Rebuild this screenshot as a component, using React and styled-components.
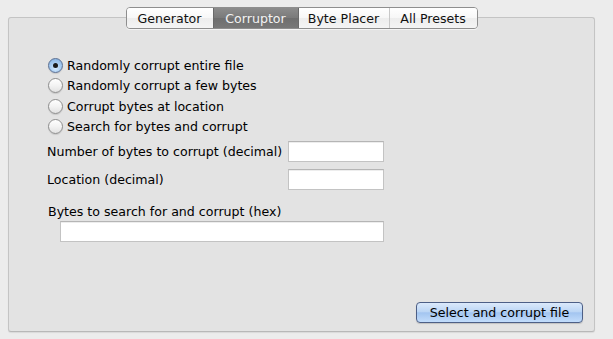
import React, { useState } from "react";
import styled, { createGlobalStyle } from "styled-components";

const Global = createGlobalStyle`
  html, body { margin: 0; padding: 0; background: #ececec; }
  body { font-family: "DejaVu Sans", "Liberation Sans", sans-serif; font-size: 12.6px; color: #000; }
  * { box-sizing: border-box; }
`;

const Window = styled.div`
  width: 613px;
  height: 339px;
  background: #ececec;
  padding: 7px 0 0 8px;
`;

const TabView = styled.div`
  width: 587px;
  display: flex;
  flex-direction: column;
  align-items: center;
`;

const TabBar = styled.div`
  display: flex;
  height: 22px;
  border: 1px solid #8e8e8e;
  border-radius: 4px;
  overflow: hidden;
  position: relative;
  z-index: 1;
  box-shadow: 0 1px 0 rgba(255,255,255,0.6);
`;

const Tab = styled.button`
  font: inherit;
  font-size: 12.6px;
  height: 100%;
  width: ${(p) => p.$w}px;
  padding: 0;
  border: none;
  border-left: ${(p) => (p.$first ? "none" : `1px solid ${p.$sep}`)};
  background: ${(p) =>
    p.$active
      ? "linear-gradient(#8c8c8c, #7a7a7a 50%, #6e6e6e 51%, #787878)"
      : "linear-gradient(#ffffff, #f7f7f7 50%, #ededed 51%, #f4f4f4)"};
  color: ${(p) => (p.$active ? "#f2f2f2" : "#111")};
  display: flex;
  align-items: center;
  justify-content: center;
  cursor: default;
`;

const Panel = styled.div`
  margin-top: -12px;
  width: 587px;
  height: 315px;
  background: #e3e3e3;
  border: 1px solid #c4c4c4;
  border-bottom-color: #b8b8b8;
  border-radius: 3px;
  box-shadow: 0 1px 1px rgba(0,0,0,0.08);
  display: flex;
  flex-direction: column;
  padding: 37px 11px 8px 39px;
`;

const RadioGroup = styled.div`
  display: flex;
  flex-direction: column;
`;

const RadioRow = styled.label`
  display: flex;
  align-items: center;
  height: 20.5px;
  gap: 4px;
  white-space: nowrap;
`;

const RadioCircle = styled.span`
  width: 15px;
  height: 15px;
  border-radius: 50%;
  border: 1px solid ${(p) => (p.$on ? "#5a6f93" : "#8d8d8d")};
  background: ${(p) =>
    p.$on
      ? "radial-gradient(circle at 50% 70%, #d8ecff 0%, #a9cdf2 45%, #7aa9dc 100%)"
      : "linear-gradient(#ffffff, #f3f3f3 50%, #e2e2e2 100%)"};
  display: flex;
  align-items: center;
  justify-content: center;
  flex: none;
  box-shadow: 0 1px 1px rgba(0,0,0,0.12);
`;

const Dot = styled.span`
  width: 5px;
  height: 5px;
  border-radius: 50%;
  background: #1a1a1a;
`;

const Fields = styled.div`
  display: flex;
  flex-direction: column;
  margin-left: -1px;
  margin-top: 4px;
`;

const FieldRow = styled.div`
  display: grid;
  grid-template-columns: 241px 96px;
  align-items: center;
  height: 21px;
  margin-bottom: ${(p) => p.$mb || 0}px;
`;

const Label = styled.span`
  white-space: nowrap;
`;

const TextInput = styled.input`
  height: 21px;
  width: ${(p) => p.$w || 96}px;
  margin-left: ${(p) => p.$ml || 0}px;
  border: 1px solid #c3c3c3;
  border-top-color: #b5b5b5;
  background: #fff;
  box-shadow: inset 0 1px 0 #ededed;
  outline: none;
  font: inherit;
  padding: 0 3px;
`;

const HexBlock = styled.div`
  display: flex;
  flex-direction: column;
  gap: 3px;
`;

const HexLabel = styled.span`
  margin-left: 1px;
  margin-top: 14px;
  height: 14px;
  display: flex;
  align-items: center;
  white-space: nowrap;
`;

const Footer = styled.div`
  margin-top: auto;
  display: flex;
  justify-content: flex-end;
`;

const AquaButton = styled.button`
  width: 167px;
  height: 21px;
  border-radius: 4px;
  border: 1px solid #4d5f86;
  font: inherit;
  font-size: 12.6px;
  color: #000;
  background: linear-gradient(#dbe9fb, #bcd6f5 45%, #a3c5f0 52%, #c2dcfb 100%);
  box-shadow: 0 1px 1px rgba(0,0,0,0.15);
  padding: 0;
  cursor: default;
`;

const tabs = [
  { name: "Generator", w: 86, sep: "#8e8e8e" },
  { name: "Corruptor", w: 85, sep: "#6a6a6a" },
  { name: "Byte Placer", w: 91, sep: "#6a6a6a" },
  { name: "All Presets", w: 88, sep: "#c8c8c8" },
];

const options = [
  "Randomly corrupt entire file",
  "Randomly corrupt a few bytes",
  "Corrupt bytes at location",
  "Search for bytes and corrupt",
];

export default function App() {
  const [sel, setSel] = useState(0);
  return (
    <Window>
      <Global />
      <TabView>
        <TabBar>
          {tabs.map((t, i) => (
            <Tab key={t.name} $w={t.w} $first={i === 0} $sep={t.sep} $active={i === 1}>
              {t.name}
            </Tab>
          ))}
        </TabBar>
        <Panel>
          <RadioGroup>
            {options.map((o, i) => (
              <RadioRow key={o} onClick={() => setSel(i)}>
                <RadioCircle $on={sel === i}>{sel === i && <Dot />}</RadioCircle>
                {o}
              </RadioRow>
            ))}
          </RadioGroup>
          <Fields>
            <FieldRow $mb={7}>
              <Label>Number of bytes to corrupt (decimal)</Label>
              <TextInput />
            </FieldRow>
            <FieldRow>
              <Label>Location (decimal)</Label>
              <TextInput />
            </FieldRow>
            <HexBlock>
              <HexLabel>Bytes to search for and corrupt (hex)</HexLabel>
              <TextInput $w={324} $ml={13} />
            </HexBlock>
          </Fields>
          <Footer>
            <AquaButton>Select and corrupt file</AquaButton>
          </Footer>
        </Panel>
      </TabView>
    </Window>
  );
}
